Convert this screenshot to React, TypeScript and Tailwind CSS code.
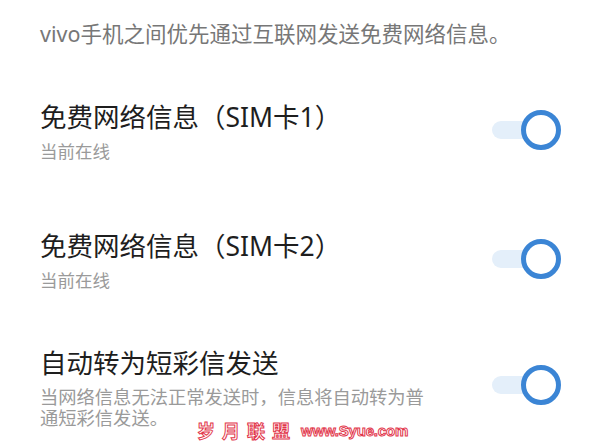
import React from "react";

const font = { fontFamily: '"Noto Sans", "Noto Sans CJK SC", sans-serif' };

function Toggle() {
  return (
    <div className="relative flex h-[40px] w-[69px] shrink-0 items-center">
      <div className="h-[18px] w-[44px] rounded-full bg-[#e4effa]" />
      <div className="absolute right-0 top-0 h-[40px] w-[40px] rounded-full border-[5px] border-[#3b85d5] bg-white" />
    </div>
  );
}

function Row({
  title,
  sub,
  className,
}: {
  title: string;
  sub: React.ReactNode;
  className?: string;
}) {
  return (
    <div className={"flex items-center justify-between " + (className ?? "")}>
      <div className="flex flex-col">
        <div className="text-[26.5px] leading-[34px] text-[#1e1e1e]">{title}</div>
        {sub}
      </div>
      <div className="-mt-[4px]">
        <Toggle />
      </div>
    </div>
  );
}

export default function App() {
  return (
    <div className="relative h-[442px] w-[600px] overflow-hidden bg-white pl-[40px] pr-[39px]" style={font}>
      <div className="pt-[20px] text-[21.5px] leading-[28px] text-[#777777]">
        vivo手机之间优先通过互联网发送免费网络信息。
      </div>
      <Row
        className="mt-[52px]"
        title="免费网络信息（SIM卡1）"
        sub={<div className="mt-[5px] text-[17.5px] leading-[24px] text-[#9a9a9a]">当前在线</div>}
      />
      <Row
        className="mt-[66px]"
        title="免费网络信息（SIM卡2）"
        sub={<div className="mt-[5px] text-[17.5px] leading-[24px] text-[#9a9a9a]">当前在线</div>}
      />
      <Row
        className="mt-[54px]"
        title="自动转为短彩信发送"
        sub={
          <div className="mt-[6px] w-[395px] text-[18.3px] leading-[21px] text-[#9a9a9a]">
            当网络信息无法正常发送时，信息将自动转为普通短彩信发送。
          </div>
        }
      />
      <div className="absolute left-[197px] top-[421px] flex items-center gap-[4px] font-bold text-white [-webkit-text-stroke:1px_#e2364b]">
        <span className="text-[18px] leading-[20px] tracking-[7px]">岁月联盟</span>
        <span
          className="text-[15px] leading-[20px] tracking-[-0.2px]"
          style={{ fontFamily: '"Liberation Sans", sans-serif' }}
        >
          www.Syue.com
        </span>
      </div>
    </div>
  );
}
